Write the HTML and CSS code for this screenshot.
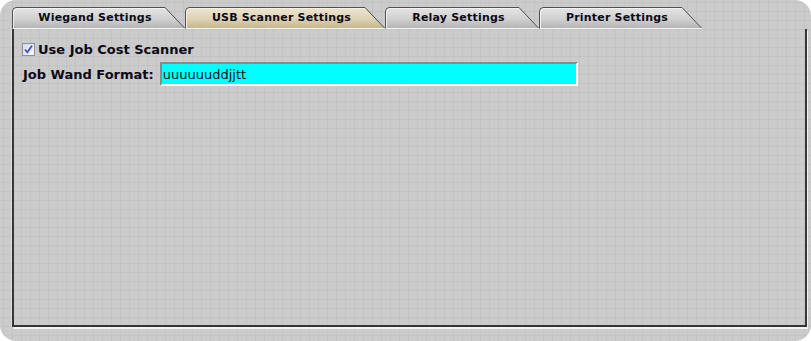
FILE: index.html
```html
<!DOCTYPE html>
<html lang="en">
<head>
  <meta charset="UTF-8" />
  <title>USB Scanner Settings</title>
  <link rel="stylesheet" href="styles.css">
</head>
<body>
  <svg class="defs" aria-hidden="true">
    <defs>
      <linearGradient id="tabGray" x1="0" y1="0" x2="0" y2="1">
        <stop offset="0" stop-color="#e4e4e4"/>
        <stop offset="0.55" stop-color="#d0d0d0"/>
        <stop offset="1" stop-color="#b4b4b4"/>
      </linearGradient>
      <linearGradient id="tabTan" x1="0" y1="0" x2="0" y2="1">
        <stop offset="0" stop-color="#ece5d0"/>
        <stop offset="0.55" stop-color="#ddd2b4"/>
        <stop offset="1" stop-color="#c6b68c"/>
      </linearGradient>
    </defs>
  </svg>

  <div class="frame">
    <div class="tabs">
      <div class="tab tab-wiegand">
        <span class="tab-body">Wiegand Settings</span>
        <svg class="tab-slant" width="20" height="22" viewBox="0 0 20 22"><polygon points="0,1 19,21 0,21" fill="url(#tabGray)"/><line x1="0" y1="0.5" x2="19.5" y2="21" stroke="#505050"/><line x1="0" y1="21.5" x2="20" y2="21.5" stroke="#f4f4f4"/></svg>
      </div>
      <div class="tab tab-usb active">
        <span class="tab-body">USB Scanner Settings</span>
        <svg class="tab-slant" width="20" height="22" viewBox="0 0 20 22"><polygon points="0,1 19,21 0,21" fill="url(#tabTan)"/><line x1="0" y1="0.5" x2="19.5" y2="21" stroke="#505050"/><line x1="0" y1="21.5" x2="20" y2="21.5" stroke="#f4f4f4"/></svg>
      </div>
      <div class="tab tab-relay">
        <span class="tab-body">Relay Settings</span>
        <svg class="tab-slant" width="20" height="22" viewBox="0 0 20 22"><polygon points="0,1 19,21 0,21" fill="url(#tabGray)"/><line x1="0" y1="0.5" x2="19.5" y2="21" stroke="#505050"/><line x1="0" y1="21.5" x2="20" y2="21.5" stroke="#f4f4f4"/></svg>
      </div>
      <div class="tab tab-printer">
        <span class="tab-body">Printer Settings</span>
        <svg class="tab-slant" width="20" height="22" viewBox="0 0 20 22"><polygon points="0,1 19,21 0,21" fill="url(#tabGray)"/><line x1="0" y1="0.5" x2="19.5" y2="21" stroke="#505050"/><line x1="0" y1="21.5" x2="20" y2="21.5" stroke="#f4f4f4"/></svg>
      </div>
    </div>

    <div class="panel">
      <div class="check-row">
        <span class="checkbox">
          <svg width="11" height="11" viewBox="0 0 11 11"><path d="M2 5.5 L4.3 8.3 L9 1.8" fill="none" stroke="#3b55b8" stroke-width="1.8"/></svg>
        </span>
        <span class="check-label">Use Job Cost Scanner</span>
      </div>
      <div class="field-row">
        <label class="field-label" for="wand-format">Job Wand Format:</label>
        <input class="field-input" id="wand-format" type="text" value="uuuuuuddjjtt">
      </div>
    </div>
  </div>
</body>
</html>
```

FILE: styles.css
```css
:root {
  --fondo: #cbcbcb;
  --linea: rgba(0, 0, 0, 0.035);
  --borde: #363636;
  --texto: #0a0a16;
}

body {
  margin: 0;
  background: #fff;
  font-family: 'DejaVu Sans', Verdana, sans-serif;
  color: var(--texto);
}

.defs {
  display: block;
  width: 0;
  height: 0;
}

.frame {
  width: 811px;
  height: 341px;
  box-sizing: border-box;
  padding: 7px 4px 0 12px;
  border-radius: 16px;
  background-color: var(--fondo);
  background-image:
    linear-gradient(90deg, var(--linea) 1px, transparent 1px),
    linear-gradient(var(--linea) 1px, transparent 1px);
  background-size: 9px 9px;
  background-position: 3px 2px;
}

/* pestañas */
.tabs {
  display: flex;
  height: 22px;
}

.tab {
  display: flex;
}

.tab-body {
  display: block;
  box-sizing: border-box;
  height: 22px;
  border-top: 1px solid #505050;
  border-left: 1px solid #505050;
  border-bottom: 1px solid #f4f4f4;
  border-top-left-radius: 5px;
  background: linear-gradient(#e4e4e4, #d0d0d0 55%, #b4b4b4);
  box-shadow: inset 1px 1px 0 #f2f2f2;
  font-size: 11px;
  font-weight: bold;
  letter-spacing: 0.2px;
  line-height: 20px;
  text-align: center;
  padding-left: 12px;
  white-space: nowrap;
}

.tab.active .tab-body {
  background: linear-gradient(#ece5d0, #ddd2b4 55%, #c6b68c);
  box-shadow: inset 1px 1px 0 #f6f1e2;
}

.tab-slant {
  display: block;
  flex-shrink: 0;
}

.tab-wiegand .tab-body { width: 153px; }
.tab-usb .tab-body { width: 180px; }
.tab-relay .tab-body { width: 134px; }
.tab-printer .tab-body { width: 143px; }

/* panel */
.panel {
  height: 298px;
  box-sizing: border-box;
  border: 2px solid var(--borde);
  border-top: none;
  box-shadow: 1px 2px 0 #f2f2f2, -1px 0 0 #dadada;
  padding: 12px 8px;
}

.check-row {
  display: flex;
  align-items: center;
  height: 16px;
  margin-bottom: 5px;
}

.checkbox {
  display: flex;
  align-items: center;
  justify-content: center;
  width: 11px;
  height: 11px;
  border: 1px solid #8d8fa3;
  background: linear-gradient(135deg, #d9dbe6, #f5f5f8);
  margin-right: 3px;
}

.check-label {
  font-size: 13px;
  font-weight: bold;
}

.field-row {
  display: flex;
  align-items: center;
}

.field-label {
  font-size: 13px;
  font-weight: bold;
  padding-left: 1px;
  margin-right: 6px;
}

.field-input {
  width: 418px;
  height: 24px;
  box-sizing: border-box;
  margin: 0;
  padding: 0 1px;
  border-top: 2px solid #8a8a8a;
  border-left: 2px solid #8a8a8a;
  border-right: 2px solid #fafafa;
  border-bottom: 2px solid #fafafa;
  background: #00ffff;
  font-family: 'DejaVu Sans', Verdana, sans-serif;
  font-size: 13px;
  color: #111;
  outline: none;
}
```
